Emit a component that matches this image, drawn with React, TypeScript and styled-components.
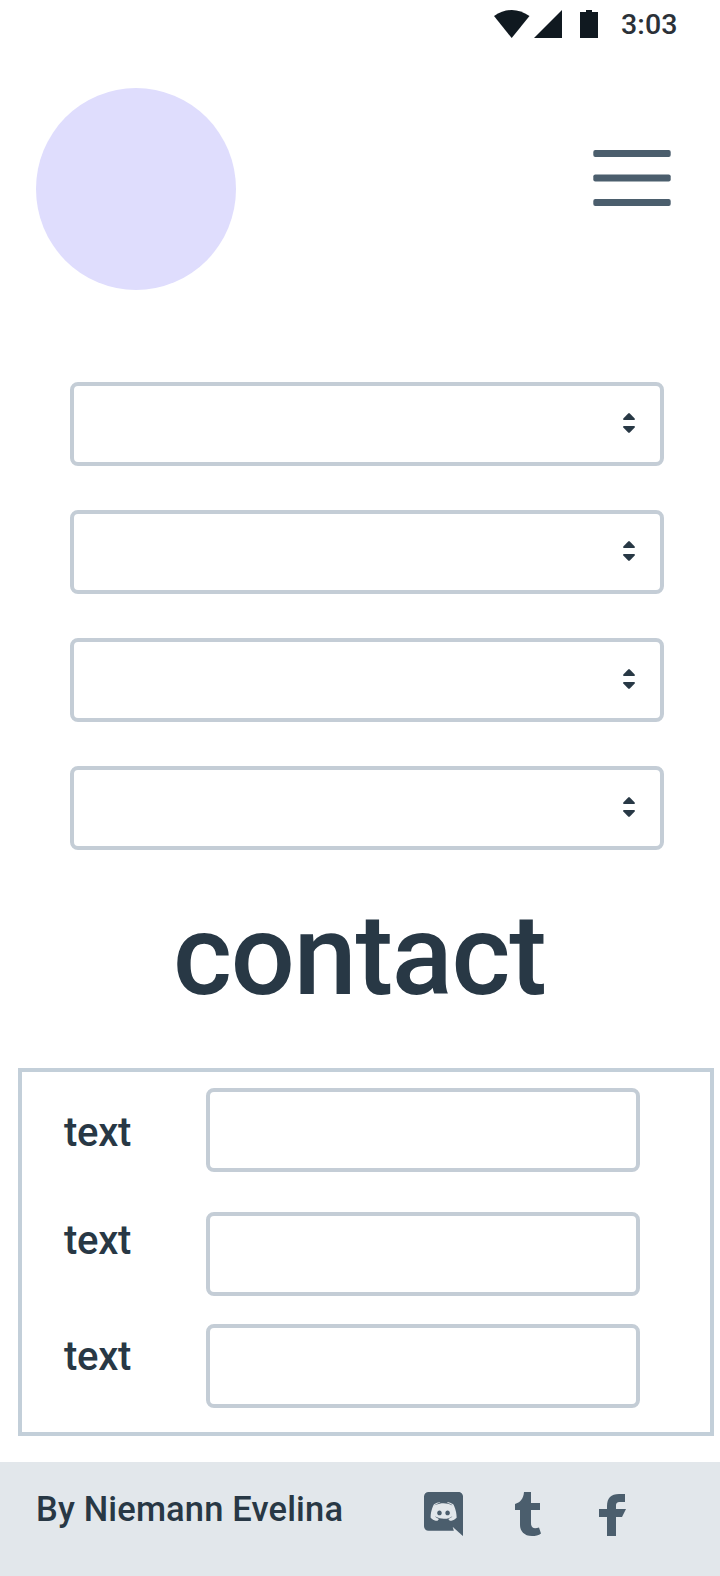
import React from 'react';
import styled, { createGlobalStyle } from 'styled-components';

const GlobalStyle = createGlobalStyle`
  *, *::before, *::after { box-sizing: border-box; }
  body {
    margin: 0;
    background: #fff;
    color: #283845;
    font-family: Roboto, "Liberation Sans", sans-serif;
    font-weight: 500;
  }
`;

const Screen = styled.div`
  width: 720px;
  height: 1576px;
  display: flex;
  flex-direction: column;
  overflow: hidden;
`;

const StatusBar = styled.div`
  display: flex;
  justify-content: flex-end;
  align-items: center;
  height: 48px;
  padding-right: 42px;
`;

const StatusIcons = styled.svg`
  display: block;
  margin-right: 22px;
`;

const Clock = styled.time`
  width: 57px;
  padding-top: 1px;
  font-size: 28.5px;
  line-height: 47px;
  letter-spacing: 0.1px;
  color: #2b3138;
  white-space: nowrap;
`;

const Header = styled.header`
  display: flex;
  justify-content: space-between;
  align-items: flex-start;
  padding: 40px 49px 0 36px;
`;

const Avatar = styled.div`
  width: 200px;
  height: 202px;
  border-radius: 50%;
  background: #dfddfd;
`;

const MenuButton = styled.button`
  display: flex;
  margin: 62px 0 0;
  padding: 0;
  border: 0;
  background: none;
`;

const SelectList = styled.div`
  display: flex;
  flex-direction: column;
  gap: 44px;
  margin: 92px 56px 0 70px;
`;

const Field = styled.div`
  height: 84px;
  border: 4px solid #c4cdd6;
  border-radius: 8px;
`;

const SelectField = styled(Field)`
  display: flex;
  justify-content: flex-end;
  align-items: center;
  padding: 0 25px 2px 0;
`;

const Title = styled.h1`
  margin: 42px 0 0 173px;
  font-size: 113px;
  line-height: 128px;
  font-weight: 500;
  letter-spacing: -1.2px;
  white-space: nowrap;
`;

const Form = styled.form`
  flex: none;
  height: 368px;
  margin: 48px 6px 0 18px;
  padding: 16px 70px 0 43px;
  border: 4px solid #c3cfd9;
`;

const FormRow = styled.label<{ $gap: number; $shift: number }>`
  display: grid;
  grid-template-columns: 141px 1fr;
  margin-top: ${(p) => p.$gap}px;

  > span {
    padding-top: ${(p) => p.$shift}px;
    margin-left: -1px;
    font-size: 40px;
    line-height: 48px;
    letter-spacing: -0.3px;
    white-space: nowrap;
  }
`;

const Footer = styled.footer`
  display: flex;
  align-items: flex-start;
  height: 114px;
  margin-top: 26px;
  padding: 0 94px 0 36px;
  background: #e2e7eb;
`;

const Author = styled.p`
  flex: 1;
  margin: 27px 0 0;
  font-size: 34.5px;
  line-height: 40px;
  letter-spacing: 0.15px;
  white-space: nowrap;
`;

const Social = styled.div`
  display: flex;
  align-items: flex-end;
  padding-top: 30px;
  color: #4b5e6d;
`;

const SocialIcon = styled.svg<{ $space?: number; $lift?: number }>`
  display: block;
  margin-left: ${(p) => p.$space ?? 0}px;
  fill: currentColor;
`;

const Sorter = () => (
  <svg width="12" height="20" viewBox="0 0 12 20" fill="#283845">
    <path d="M5.4.3Q6 0 6.6.3L11.7 5.5Q12.4 7 11 7H1Q-.4 7 .3 5.5Z" />
    <path d="M1 13H11Q12.4 13 11.7 14.5L6.6 19.7Q6 20 5.4 19.7L.3 14.5Q-.4 13 1 13Z" />
  </svg>
);

const rows = [
  { gap: 0, shift: 21 },
  { gap: 40, shift: 5 },
  { gap: 28, shift: 9 },
];

export default function App() {
  return (
    <>
      <GlobalStyle />
      <Screen>
        <StatusBar>
          <StatusIcons width="105" height="28" viewBox="0 0 105 28" fill="#101920">
            <path d="M0 6Q18-6 35.500 6L17.700 28Z" />
            <path d="M68 0V28H40Z" />
            <path d="M92 0H98V2H104V28H86V2H92Z" />
          </StatusIcons>
          <Clock>3:03</Clock>
        </StatusBar>
        <Header>
          <Avatar />
          <MenuButton aria-label="Menu">
            <svg width="78" height="56" viewBox="0 0 78 56" fill="#4b5e6d">
              <rect x=".3" width="77.4" height="7" rx="2" />
              <rect x=".3" y="24.5" width="77.4" height="7" rx="2" />
              <rect x=".3" y="49" width="77.4" height="7" rx="2" />
            </svg>
          </MenuButton>
        </Header>
        <SelectList>
          {[0, 1, 2, 3].map((n) => (
            <SelectField key={n}>
              <Sorter />
            </SelectField>
          ))}
        </SelectList>
        <Title>contact</Title>
        <Form>
          {rows.map((row, n) => (
            <FormRow key={n} $gap={row.gap} $shift={row.shift}>
              <span>text</span>
              <Field />
            </FormRow>
          ))}
        </Form>
        <Footer>
          <Author>By Niemann Evelina</Author>
          <Social>
            <SocialIcon width="39" height="44" viewBox="0 0 448 512" preserveAspectRatio="none">
              <path d="M297.216 243.2c0 15.616-11.52 28.416-26.112 28.416-14.336 0-26.112-12.8-26.112-28.416s11.52-28.416 26.112-28.416c14.592 0 26.112 12.8 26.112 28.416zm-119.552-28.416c-14.592 0-26.112 12.8-26.112 28.416s11.776 28.416 26.112 28.416c14.592 0 26.112-12.8 26.112-28.416.256-15.616-11.52-28.416-26.112-28.416zM448 52.736V512c-64.494-56.994-43.868-38.128-118.784-107.776l13.568 47.36H52.48C23.552 451.584 0 428.032 0 398.848V52.736C0 23.552 23.552 0 52.48 0h343.04C424.448 0 448 23.552 448 52.736zm-72.96 242.688c0-82.432-36.864-149.248-36.864-149.248-36.864-27.648-71.936-26.88-71.936-26.88l-3.584 4.096c43.52 13.312 63.744 32.512 63.744 32.512-60.811-33.329-132.244-33.335-191.232-7.424-9.472 4.352-15.104 7.424-15.104 7.424s21.248-20.224 67.328-33.536l-2.56-3.072s-35.072-.768-71.936 26.88c0 0-36.864 66.816-36.864 149.248 0 0 21.504 37.12 78.08 38.912 0 0 9.472-11.52 17.152-21.248-32.512-9.728-44.8-30.208-44.8-30.208 3.766 2.636 9.976 6.053 10.496 6.4 43.21 24.198 104.588 32.126 159.744 8.96 8.96-3.328 18.944-8.192 29.44-15.104 0 0-12.8 20.992-46.336 30.464 7.68 9.728 16.896 20.736 16.896 20.736 56.576-1.792 78.336-38.912 78.336-38.912z" />
            </SocialIcon>
            <SocialIcon $space={52} width="26" height="44" viewBox="0 0 26 44">
              <path d="M9 0H16V11H25V18H16V31C16 37 20 37 24 35.5L26 41.5C24 43.5 20 44 17 44C9 44 5 39 5 33V18H0V12C5 10.500 8.500 7 9 0Z" />
            </SocialIcon>
            <SocialIcon $space={58} width="27" height="42" viewBox="0 0 27 42">
              <path d="M8 42V23H0V15H8V12C8 4 12 0 20 0H26V8H21C18 8 17 9 17 12V15H27L23 23H17V42Z" />
            </SocialIcon>
          </Social>
        </Footer>
      </Screen>
    </>
  );
}
